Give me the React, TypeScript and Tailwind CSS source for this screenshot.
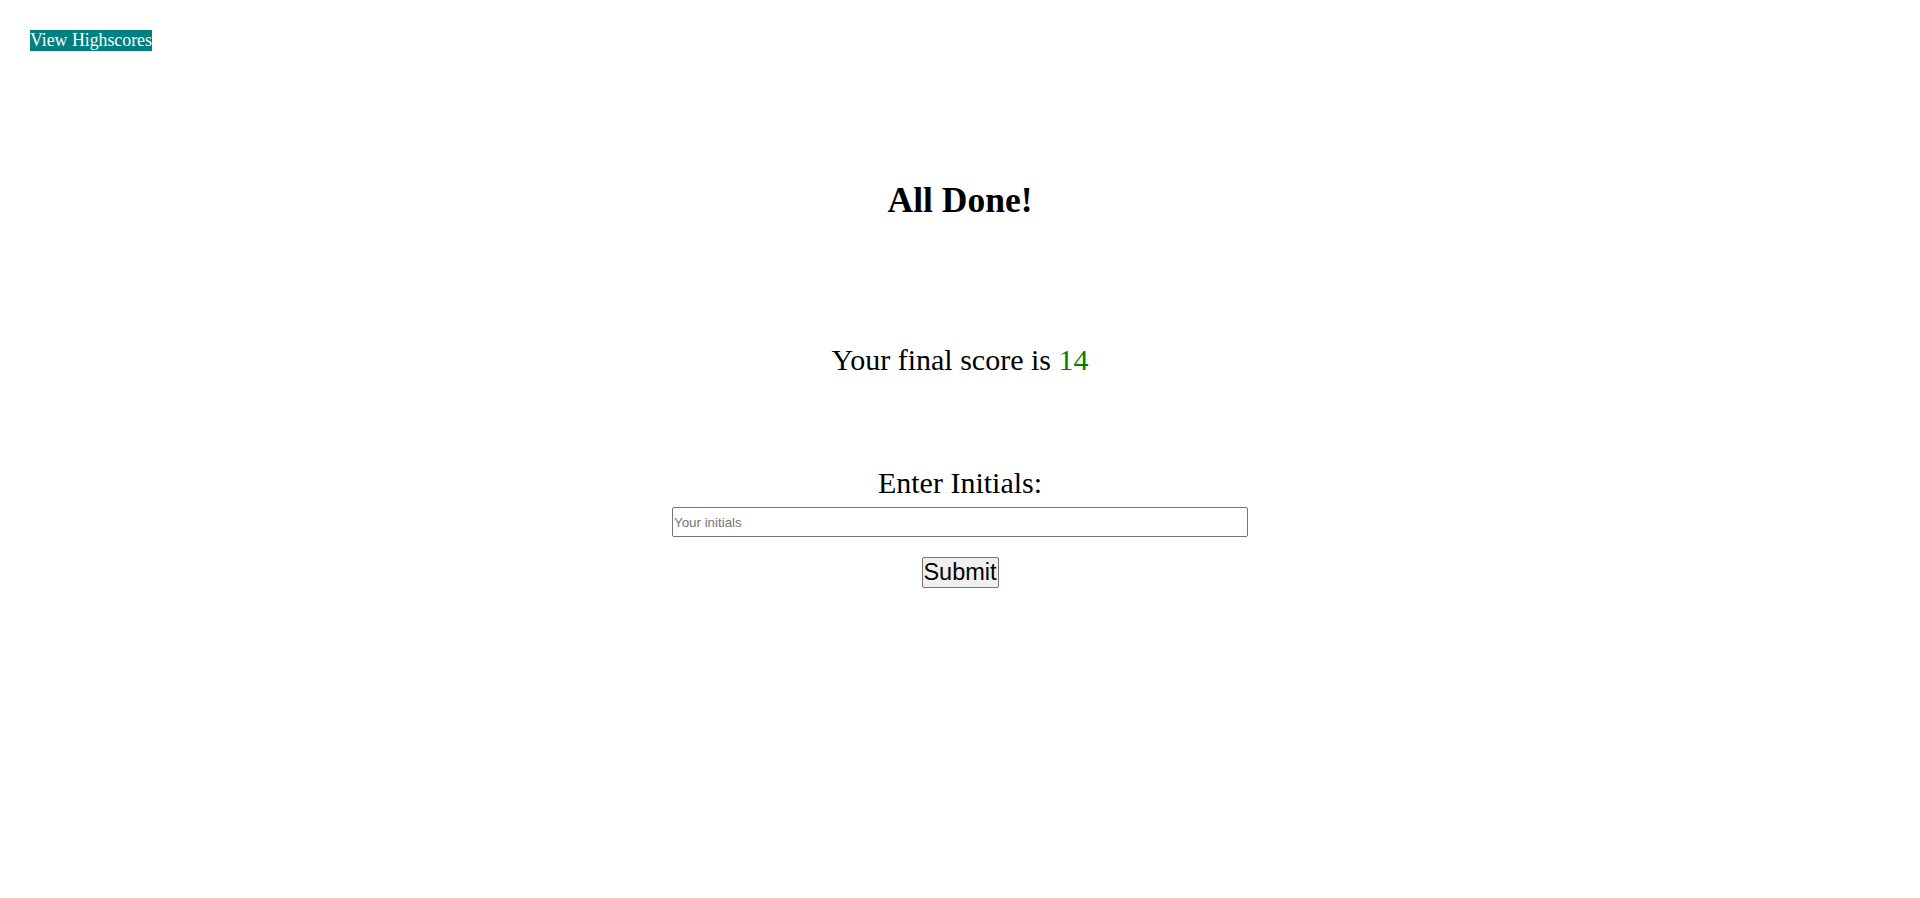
function App() {
  return (
    <div className="min-h-screen bg-white font-['Liberation_Serif',serif] text-black">
      <div className="pl-[30px] pt-[30px]">
        <button
          type="button"
          className="block h-[21px] bg-[#008080] px-0 text-[17.8px] leading-[21px] whitespace-nowrap text-white"
        >
          View Highscores
        </button>
      </div>

      <div className="flex flex-col items-center">
        <h1 className="mt-[129px] text-[35.5px] font-bold leading-[41px]">All Done!</h1>

        <p className="mt-[122px] text-[30px] leading-[34px]">
          Your final score is <span className="text-[#008000]">14</span>
        </p>

        <div className="mt-[89px] flex flex-col items-center">
          <label htmlFor="initials" className="text-[30px] leading-[33px]">
            Enter Initials:
          </label>
          <input
            id="initials"
            type="text"
            placeholder="Your initials"
            className="mt-[8px] h-[30px] w-[576px] rounded-[2px] border border-[#767676] px-[1px] font-['Liberation_Sans',sans-serif] text-[13.33px] placeholder:text-[#757575]"
          />
          <button
            type="submit"
            className="mt-[20px] h-[31px] w-[77px] rounded-[2px] border border-[#767676] bg-[#efefef] px-0 font-['Liberation_Sans',sans-serif] text-[23.5px] leading-[29px]"
          >
            Submit
          </button>
        </div>
      </div>
    </div>
  );
}

export default App;
